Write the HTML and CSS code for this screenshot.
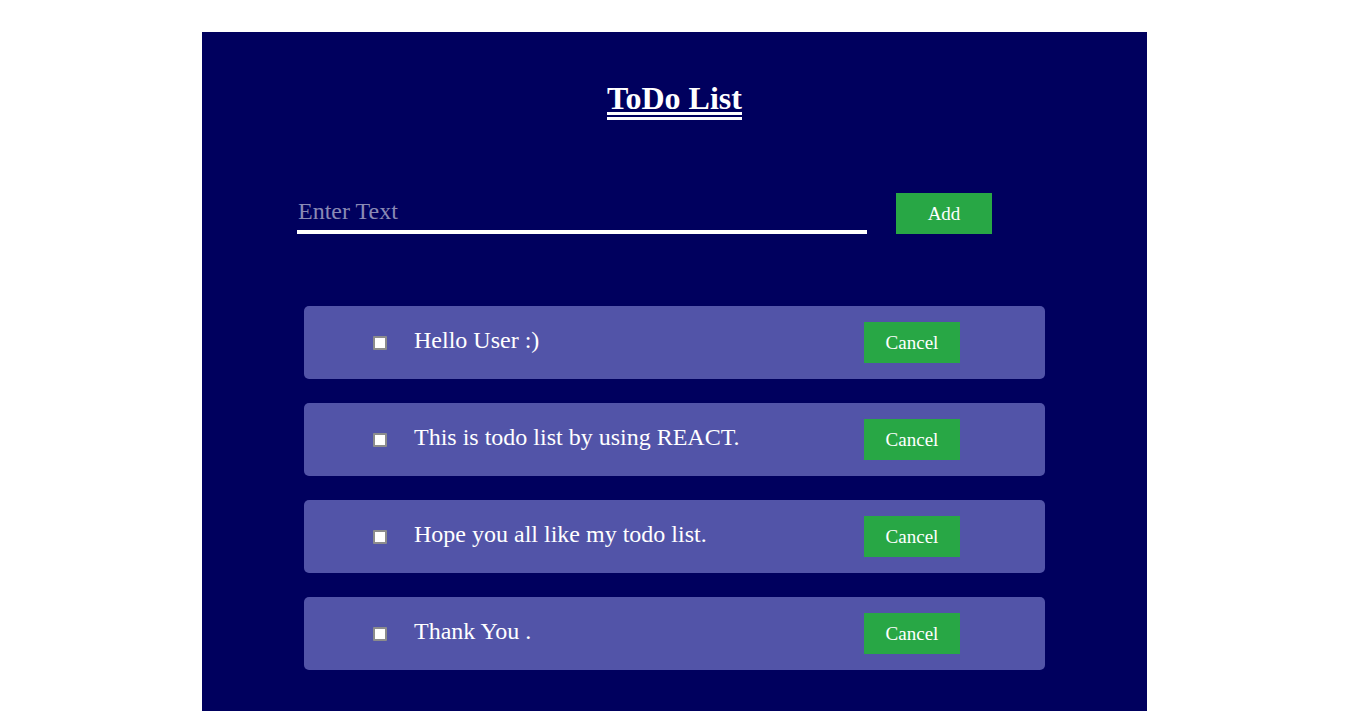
FILE: index.html
```html
<!DOCTYPE html>
<html>
<head>
<meta charset="utf-8">
<title>ToDo List</title>
<link rel="stylesheet" href="styles.css">
</head>
<body>
<div class="page">
  <div class="app">
    <div class="title-row"><h1 class="title">ToDo List</h1></div>
    <div class="entry">
      <input class="entry-input" type="text" placeholder="Enter Text">
      <button class="btn btn-add">Add</button>
    </div>
    <ul class="list">
      <li class="item"><input class="check" type="checkbox"><span class="item-text">Hello User :)</span><button class="btn btn-cancel">Cancel</button></li>
      <li class="item"><input class="check" type="checkbox"><span class="item-text">This is todo list by using REACT.</span><button class="btn btn-cancel">Cancel</button></li>
      <li class="item"><input class="check" type="checkbox"><span class="item-text">Hope you all like my todo list.</span><button class="btn btn-cancel">Cancel</button></li>
      <li class="item"><input class="check" type="checkbox"><span class="item-text">Thank You .</span><button class="btn btn-cancel">Cancel</button></li>
    </ul>
  </div>
</div>
</body>
</html>
```
FILE: styles.css
```css
html, body {
  margin: 0;
  padding: 0;
  background: #ffffff;
  font-family: "Liberation Serif", "Times New Roman", serif;
  overflow: hidden;
}
.page {
  display: flex;
  justify-content: center;
  padding-top: 32px;
}
.app {
  width: 945px;
  height: 700px;
  background: #00005e;
  box-sizing: border-box;
  padding-top: 52px;
}
.title-row {
  display: flex;
  justify-content: center;
}
.title {
  margin: 0;
  color: #ffffff;
  font-size: 32px;
  font-weight: bold;
  line-height: 28px;
  border-bottom: 8px double #ffffff;
  padding-bottom: 0;
}
.entry {
  display: flex;
  align-items: flex-end;
  margin-top: 73px;
  padding-left: 95px;
  gap: 29px;
}
.entry-input {
  width: 570px;
  height: 38px;
  box-sizing: border-box;
  background: transparent;
  border: none;
  border-bottom: 4px solid #ffffff;
  outline: none;
  color: #ffffff;
  font-family: "Liberation Serif", "Times New Roman", serif;
  font-size: 24px;
  padding: 0 2px 4px 1px;
}
.entry-input::placeholder {
  color: #8a8ab5;
}
.btn {
  width: 96px;
  height: 41px;
  background: #28a745;
  color: #ffffff;
  border: none;
  font-family: "Liberation Serif", "Times New Roman", serif;
  font-size: 19px;
  padding: 0;
  cursor: pointer;
}
.list {
  list-style: none;
  margin: 72px 0 0;
  padding: 0 102px;
  display: flex;
  flex-direction: column;
  gap: 24px;
}
.item {
  height: 73px;
  background: #5254a8;
  border-radius: 5px;
  display: flex;
  align-items: center;
  padding: 0 85px 0 68px;
}
.check {
  appearance: none;
  -webkit-appearance: none;
  width: 14px;
  height: 14px;
  box-sizing: border-box;
  border: 2px solid #8c8c8c;
  border-radius: 1px;
  background: #ffffff;
  margin: 1px 0 0 1px;
}
.item-text {
  flex: 1;
  color: #ffffff;
  font-size: 24px;
  margin-left: 27px;
  margin-top: -4px;
}
```
